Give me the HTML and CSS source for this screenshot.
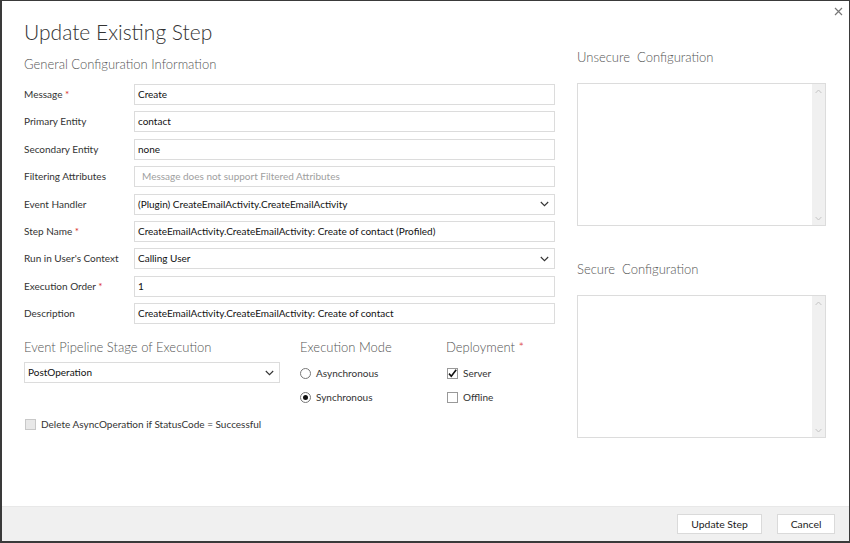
FILE: index.html
```html
<!DOCTYPE html>
<html>
<head>
<meta charset="utf-8">
<link rel="stylesheet" href="styles.css">
</head>
<body>
<div class="dialog">
  <div class="close" aria-label="Close">
    <svg width="9" height="9" viewBox="0 0 9 9"><path d="M1 1L8 8M8 1L1 8" stroke="#777" stroke-width="1.2" fill="none"/></svg>
  </div>
  <div class="content">
    <div class="left">
      <h1 class="title">Update Existing Step</h1>
      <h2 class="subtitle">General Configuration Information</h2>
      <div class="form">
        <div class="label">Message <span class="req">*</span></div>
        <div class="field">Create</div>
        <div class="label">Primary Entity</div>
        <div class="field">contact</div>
        <div class="label">Secondary Entity</div>
        <div class="field">none</div>
        <div class="label">Filtering Attributes</div>
        <div class="field placeholder">Message does not support Filtered Attributes</div>
        <div class="label">Event Handler</div>
        <div class="field select"><span>(Plugin) CreateEmailActivity.CreateEmailActivity</span><svg class="chev" width="9" height="6" viewBox="0 0 9 6"><path d="M0.8 1L4.5 4.7L8.2 1" stroke="#333" stroke-width="1.1" fill="none"/></svg></div>
        <div class="label">Step Name <span class="req">*</span></div>
        <div class="field">CreateEmailActivity.CreateEmailActivity: Create of contact (Profiled)</div>
        <div class="label">Run in User's Context</div>
        <div class="field select"><span>Calling User</span><svg class="chev" width="9" height="6" viewBox="0 0 9 6"><path d="M0.8 1L4.5 4.7L8.2 1" stroke="#333" stroke-width="1.1" fill="none"/></svg></div>
        <div class="label">Execution Order <span class="req">*</span></div>
        <div class="field">1</div>
        <div class="label">Description</div>
        <div class="field">CreateEmailActivity.CreateEmailActivity: Create of contact</div>
      </div>
      <div class="options">
        <div class="group pipeline">
          <h3 class="gtitle">Event Pipeline Stage of Execution</h3>
          <div class="field select"><span>PostOperation</span><svg class="chev" width="9" height="6" viewBox="0 0 9 6"><path d="M0.8 1L4.5 4.7L8.2 1" stroke="#333" stroke-width="1.1" fill="none"/></svg></div>
        </div>
        <div class="group mode">
          <h3 class="gtitle">Execution Mode</h3>
          <div class="opt"><span class="radio"></span>Asynchronous</div>
          <div class="opt"><span class="radio on"></span>Synchronous</div>
        </div>
        <div class="group deploy">
          <h3 class="gtitle">Deployment <span class="req">*</span></h3>
          <div class="opt"><span class="check"><svg width="11" height="11" viewBox="0 0 11 11"><path d="M2 5.6L4.3 8.2L9.2 1.8" stroke="#111" stroke-width="1.6" fill="none"/></svg></span>Server</div>
          <div class="opt"><span class="check"></span>Offline</div>
        </div>
      </div>
      <div class="opt delete"><span class="check disabled"></span>Delete AsyncOperation if StatusCode = Successful</div>
    </div>
    <div class="right">
      <h3 class="gtitle rtitle">Unsecure&nbsp; Configuration</h3>
      <div class="textarea">
        <div class="ta-body"></div>
        <div class="scroll">
          <svg width="7" height="5" viewBox="0 0 7 5"><path d="M0.6 4L3.5 1L6.4 4" stroke="#c4c4c4" stroke-width="1" fill="none"/></svg>
          <svg width="7" height="5" viewBox="0 0 7 5"><path d="M0.6 1L3.5 4L6.4 1" stroke="#c4c4c4" stroke-width="1" fill="none"/></svg>
        </div>
      </div>
      <h3 class="gtitle rtitle second">Secure&nbsp; Configuration</h3>
      <div class="textarea">
        <div class="ta-body"></div>
        <div class="scroll">
          <svg width="7" height="5" viewBox="0 0 7 5"><path d="M0.6 4L3.5 1L6.4 4" stroke="#c4c4c4" stroke-width="1" fill="none"/></svg>
          <svg width="7" height="5" viewBox="0 0 7 5"><path d="M0.6 1L3.5 4L6.4 1" stroke="#c4c4c4" stroke-width="1" fill="none"/></svg>
        </div>
      </div>
    </div>
  </div>
  <div class="footer">
    <button class="btn update">Update Step</button>
    <button class="btn cancel">Cancel</button>
  </div>
</div>
</body>
</html>
```
FILE: styles.css
```css
* { box-sizing: border-box; }
html, body { margin: 0; padding: 0; background: #fff; }
body { font-family: Lato, "Open Sans", sans-serif; color: #333; }

.dialog {
  position: relative;
  width: 850px;
  height: 543px;
  border: 1px solid #3a3a3a;
  border-left-width: 2px;
  border-bottom-width: 2px;
  display: flex;
  flex-direction: column;
  background: #fff;
}

.close {
  position: absolute;
  top: 6px;
  right: 6px;
  width: 9px;
  height: 9px;
  line-height: 0;
}

.content {
  flex: 1;
  display: flex;
  padding: 15px 0 0 22px;
}

.left { width: 532px; }
.right { width: 249px; margin-left: 21px; padding-top: 31px; }

.title {
  margin: 0;
  font-weight: 300;
  font-size: 21px;
  line-height: 32px;
  color: #333;
}
.subtitle {
  margin: 6px 0 0;
  font-weight: 300;
  font-size: 13px;
  line-height: 20px;
  color: #555;
}

.form {
  margin-top: 10px;
  display: grid;
  grid-template-columns: 110px 421px;
  row-gap: 6.4px;
}
.label {
  font-size: 10px;
  line-height: 21px;
  color: #333;
  white-space: nowrap;
}
.req { color: #d9302c; }

.field {
  height: 21px;
  border: 1px solid #dcdcdc;
  font-size: 10px;
  line-height: 19px;
  padding: 0 3px;
  color: #111;
  white-space: nowrap;
  overflow: hidden;
  background: #fff;
}
.field.placeholder { color: #a0a0a0; padding-left: 7px; }
.field.select {
  display: flex;
  align-items: center;
  justify-content: space-between;
  padding-right: 5px;
}
.chev { flex: none; }

.options {
  display: flex;
  margin-top: 13px;
}
.gtitle {
  margin: 0;
  font-weight: 300;
  font-size: 13px;
  line-height: 20px;
  color: #555;
}
.pipeline { width: 256px; }
.pipeline .field { margin-top: 5px; }
.mode { margin-left: 20px; width: 146px; }

.opt {
  display: flex;
  align-items: center;
  font-size: 10px;
  line-height: 20px;
  height: 20px;
  color: #333;
  margin-top: 4px;
}
.group .opt:first-of-type { margin-top: 6px; }

.radio {
  width: 11px;
  height: 11px;
  border: 1px solid #777;
  border-radius: 50%;
  margin-right: 5px;
  display: flex;
  align-items: center;
  justify-content: center;
  flex: none;
}
.radio.on::after {
  content: "";
  width: 5px;
  height: 5px;
  border-radius: 50%;
  background: #111;
}

.check {
  width: 11px;
  height: 11px;
  border: 1px solid #999;
  margin: 0 5px 0 1px;
  flex: none;
  position: relative;
  line-height: 0;
}
.check svg { position: absolute; left: -1px; top: -1px; }
.check.disabled { background: #e8e8e8; border-color: #c8c8c8; }

.delete { margin-top: 7px; }

.rtitle { margin: 0; }
.rtitle.second { margin-top: 33px; }
.textarea {
  margin-top: 16px;
  height: 143px;
  border: 1px solid #dcdcdc;
  display: flex;
}
.ta-body { flex: 1; }
.scroll {
  width: 13px;
  background: #f0f0f0;
  display: flex;
  flex-direction: column;
  justify-content: space-between;
  align-items: center;
  padding: 5px 0 4px;
}

.footer {
  height: 35px;
  background: #f0f0f0;
  border-top: 1px solid #e8e8e8;
  display: flex;
  justify-content: flex-end;
  align-items: center;
  padding-right: 14px;
  gap: 15px;
}
.btn {
  height: 20px;
  background: #fff;
  border: 1px solid #dadada;
  font-family: Lato, "Open Sans", sans-serif;
  font-size: 10.4px;
  color: #222;
  padding: 0;
  cursor: pointer;
}
.btn.update { width: 85px; }
.btn.cancel { width: 58px; }
```
